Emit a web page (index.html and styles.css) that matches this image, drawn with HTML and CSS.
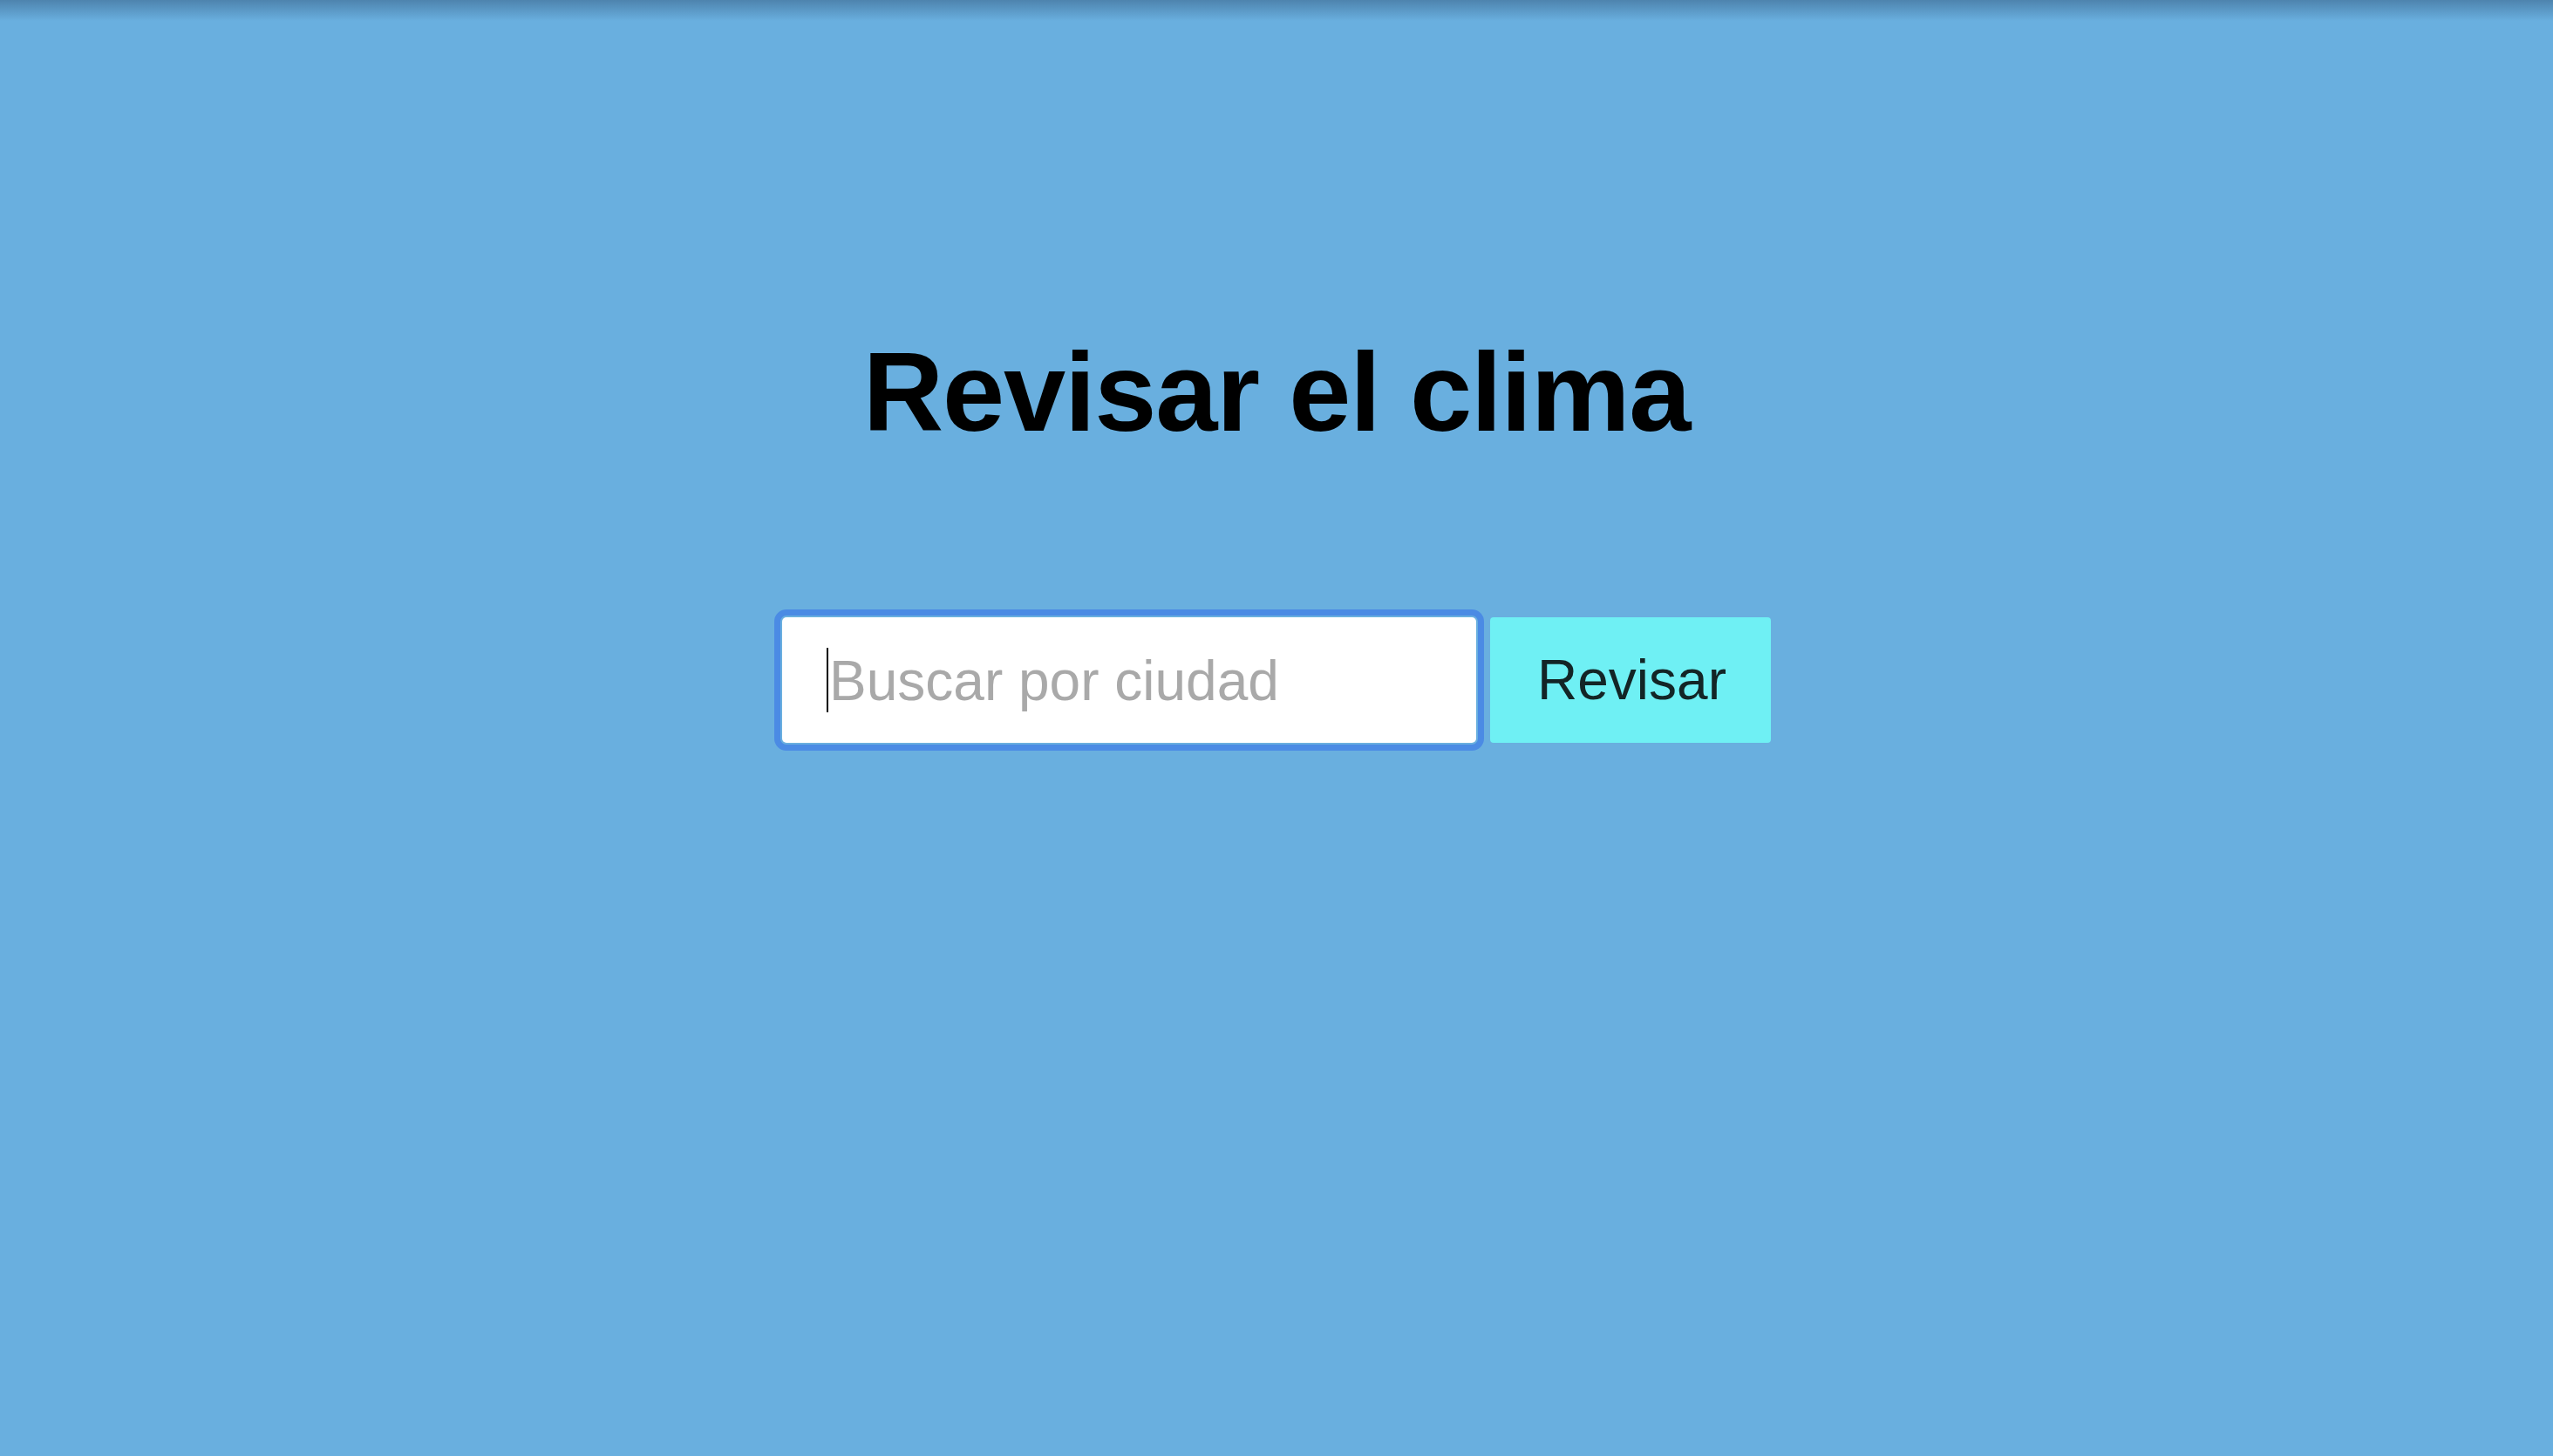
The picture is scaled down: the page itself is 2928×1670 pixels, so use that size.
FILE: index.html
```html
<!DOCTYPE html>
<html lang="es">
<head>
<meta charset="utf-8">
<title>Revisar el clima</title>
<link rel="stylesheet" href="styles.css">
</head>
<body>
<div class="top-shade"></div>
<main class="page">
  <h1 class="title">Revisar el clima</h1>
  <form class="search" onsubmit="return false">
    <div class="field">
      <input class="search-input" type="text" placeholder="Buscar por ciudad">
      <span class="caret"></span>
    </div>
    <button class="search-btn" type="submit">Revisar</button>
  </form>
</main>
</body>
</html>
```
FILE: styles.css
```css
html, body {
  margin: 0;
  padding: 0;
}
body {
  background: #69afdf;
  font-family: "Liberation Sans", Arial, sans-serif;
  min-height: 1670px;
  position: relative;
}
.top-shade {
  position: absolute;
  top: 0;
  left: 0;
  right: 0;
  height: 24px;
  background: linear-gradient(to bottom, rgba(20, 40, 70, 0.32), rgba(20, 40, 70, 0));
  pointer-events: none;
}
.page {
  display: flex;
  flex-direction: column;
  align-items: center;
  padding-top: 376px;
}
.title {
  margin: 0;
  font-size: 128px;
  font-weight: 700;
  line-height: 147px;
  letter-spacing: -1.2px;
  color: #000;
}
.search {
  margin-top: 185px;
  display: flex;
  align-items: stretch;
  gap: 16px;
}
.field {
  position: relative;
  display: flex;
}
.search-input {
  box-sizing: border-box;
  width: 796px;
  height: 144px;
  border: none;
  border-radius: 5px;
  padding: 2px 48px 0 54px;
  font-family: "Liberation Sans", Arial, sans-serif;
  font-size: 64px;
  color: #000;
  background: #fff;
  outline: 7px solid #4b8be4;
  outline-offset: 2px;
}
.search-input::placeholder {
  color: #a9a9a9;
}
.caret {
  position: absolute;
  left: 51px;
  top: 35px;
  width: 2px;
  height: 74px;
  background: #000;
}
.search-btn {
  box-sizing: border-box;
  width: 322px;
  height: 144px;
  border: none;
  border-radius: 4px;
  background: #6ff0f4;
  color: #132526;
  font-family: "Liberation Sans", Arial, sans-serif;
  font-size: 64px;
  padding: 0 54px;
  cursor: pointer;
}
```
